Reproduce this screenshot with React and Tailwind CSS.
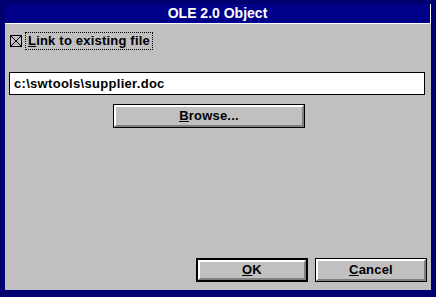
import React from "react";

const font = { fontFamily: '"Liberation Sans", Arial, sans-serif' };

const Button = ({ children, isDefault, className = "" }) => (
  <button
    className={`h-[24px] bg-[#c0c0c0] text-black text-[13px] tracking-[0.2px] font-bold flex items-center justify-center ${
      isDefault ? "border-2 border-black" : "border border-black"
    } ${className}`}
  >
    <span className="w-full h-full flex items-center justify-center border-t-2 border-l-2 border-t-white border-l-white border-b-2 border-r-2 border-b-[#808080] border-r-[#808080]">
      {children}
    </span>
  </button>
);

export default function App() {
  return (
    <div
      className="w-[436px] h-[297px] bg-[#000070] pt-[4px] pl-[5px] pr-[5px] pb-[7px] flex flex-col"
      style={font}
    >
      {/* title bar */}
      <div className="h-[20px] bg-[#000088] border-b border-r border-white flex items-center justify-center text-white text-[14px] font-bold">
        OLE 2.0 Object
      </div>

      {/* body */}
      <div className="flex-1 bg-[#c0c0c0] flex flex-col pt-[8px] pl-[4px] pr-[4px] pb-[8px]">
        <div className="flex items-center h-[18px]">
          <div className="ml-[1px] w-[12px] h-[12px] bg-[#c0c0c0] border border-black">
            <svg width="10" height="10" viewBox="0 0 10 10">
              <path d="M0 0L10 10M10 0L0 10" stroke="black" strokeWidth="1" />
            </svg>
          </div>
          <div className="ml-[3px] h-[18px] px-[2px] border border-dotted border-black flex items-center text-[13px] tracking-[0.2px] font-bold text-black">
            <span className="underline">L</span>ink to existing file
          </div>
        </div>

        <div className="mt-[22px] mr-[2px] h-[23px] bg-white border border-black flex items-center pl-[4px] text-[13px] tracking-[0.3px] font-bold text-black">
          c:\swtools\supplier.doc
        </div>

        <div className="mt-[9px] pl-[104px]">
          <Button className="w-[192px]">
            <span>
              <span className="underline">B</span>rowse...
            </span>
          </Button>
        </div>

        <div className="flex-1" />

        <div className="flex justify-end gap-[7px]">
          <Button isDefault className="w-[112px]">
            <span>
              <span className="underline">O</span>K
            </span>
          </Button>
          <Button className="w-[112px]">
            <span>
              <span className="underline">C</span>ancel
            </span>
          </Button>
        </div>
      </div>
    </div>
  );
}
